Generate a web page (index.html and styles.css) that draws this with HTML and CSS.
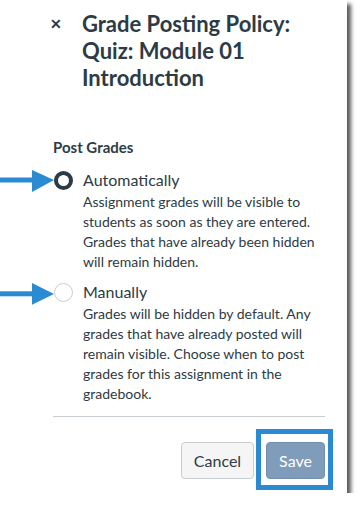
FILE: index.html
```html
<!DOCTYPE html>
<html>
<head>
<meta charset="utf-8">
<link rel="stylesheet" href="styles.css">
</head>
<body>
<div class="panel">
  <div class="header">
    <span class="close">&#x2715;</span>
    <h1 class="title">Grade Posting Policy: Quiz: Module 01 Introduction</h1>
  </div>
  <div class="section">
    <h2 class="section-title">Post Grades</h2>
    <div class="option">
      <span class="radio radio-on"></span>
      <div class="option-text">
        <div class="option-label">Automatically</div>
        <div class="option-desc">Assignment grades will be visible to students as soon as they are entered. Grades that have already been hidden will remain hidden.</div>
      </div>
    </div>
    <div class="option option-second">
      <span class="radio"></span>
      <div class="option-text">
        <div class="option-label">Manually</div>
        <div class="option-desc">Grades will be hidden by default. Any grades that have already posted will remain visible. Choose when to post grades for this assignment in the gradebook.</div>
      </div>
    </div>
  </div>
  <div class="footer">
    <button class="btn btn-cancel">Cancel</button>
    <span class="highlight"><button class="btn btn-save">Save</button></span>
  </div>
  <svg class="arrow arrow-1" width="56" height="24" viewBox="0 0 56 24"><rect x="0" y="7.5" width="34" height="5" fill="#2a8bd2"/><polygon points="32,0 54,10 32,22" fill="#2a8bd2"/></svg>
  <svg class="arrow arrow-2" width="56" height="24" viewBox="0 0 56 24"><rect x="0" y="8.3" width="34" height="5" fill="#2a8bd2"/><polygon points="32,0 54,11 32,21.7" fill="#2a8bd2"/></svg>
</div>
</body>
</html>
```
FILE: styles.css
```css
* { box-sizing: border-box; }
html, body { margin: 0; padding: 0; background: #ffffff; }
body { font-family: Lato, "Noto Sans", sans-serif; color: #2d3b45; }

.panel {
  position: relative;
  width: 347px;
  height: 493px;
  background: #ffffff;
  box-shadow: 4px 4px 4px rgba(0, 0, 0, 0.65);
}

.header {
  display: flex;
  align-items: flex-start;
  padding: 10px 0 0 48px;
}
.close {
  width: 34px;
  font-size: 14px;
  line-height: 27px;
  font-weight: 700;
  padding-left: 2px;
}
.title {
  margin: 0;
  width: 230px;
  font-size: 22px;
  line-height: 27px;
  font-weight: 700;
}

.section {
  padding: 46px 0 0 53px;
}
.section-title {
  margin: 0 0 14px 0;
  font-size: 15px;
  line-height: 20px;
  font-weight: 700;
}

.option {
  display: flex;
  align-items: flex-start;
}
.option-second { margin-top: 11px; }
.radio {
  flex: none;
  width: 19px;
  height: 19px;
  margin: 0 10px 0 1px;
  border-radius: 50%;
  border: 1px solid #c7cdd1;
  background: #fff;
}
.radio-on {
  border: 4.5px solid #2d3b45;
}
.option-text { width: 245px; }
.option-label {
  font-size: 16px;
  line-height: 20px;
  margin-top: -1px;
}
.option-desc {
  font-size: 14px;
  line-height: 20px;
  margin-top: 2px;
}

.footer {
  margin: 12px 22px 0 53px;
  border-top: 1px solid #c7cdd1;
  padding-top: 12px;
  display: flex;
  justify-content: flex-end;
  align-items: flex-start;
}
.btn {
  font-family: Lato, "Noto Sans", sans-serif;
  font-size: 16px;
  height: 37px;
  border-radius: 4px;
  margin: 0;
}
.btn-cancel {
  width: 73px;
  margin-top: 13px;
  background: #f5f5f5;
  border: 1px solid #c7cdd1;
  color: #2d3b45;
}
.highlight {
  display: block;
  margin-left: 2px;
  margin-right: -8px;
  border: 5px solid #2a8bd2;
  padding: 8px 3px 6px 5px;
}
.btn-save {
  display: block;
  width: 59px;
  background: #7f9cbb;
  border: 1px solid #7490b0;
  color: #ffffff;
}

.arrow { position: absolute; left: 0; }
.arrow-1 { top: 170px; }
.arrow-2 { top: 283px; }
```
